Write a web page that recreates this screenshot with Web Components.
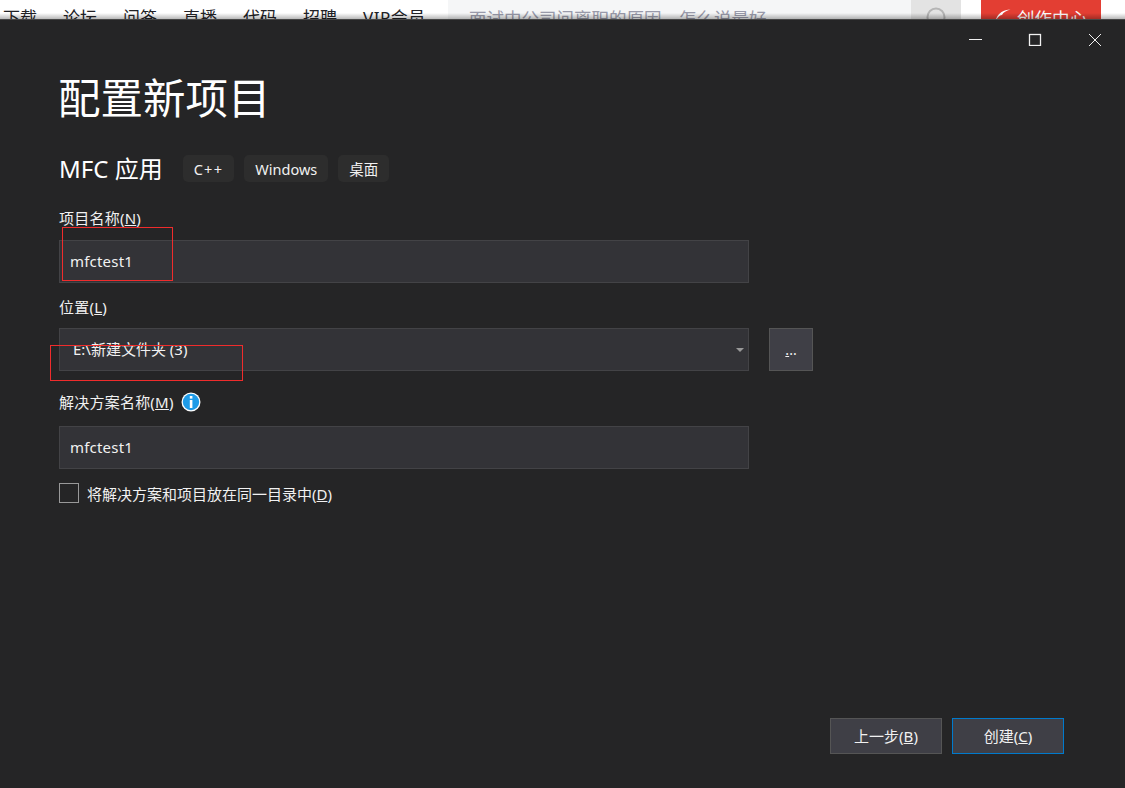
<!doctype html>
<html lang="zh-CN">
  <head>
    <meta charset="UTF-8" />
    <title>配置新项目</title>
    <style>
      html, body { margin: 0; height: 100%; overflow: hidden; background: #252526; }
      body { font-family: "Noto Sans", "Noto Sans CJK SC", sans-serif; }
    </style>
  </head>
  <body>
    <site-strip></site-strip>

    <vs-window>
      <page-title>配置新项目</page-title>

      <sub-title>
        <tag-chip style="letter-spacing:1.3px">C++</tag-chip>
        <tag-chip>Windows</tag-chip>
        <tag-chip>桌面</tag-chip>
      </sub-title>

      <form-field style="--top: 26px; --gap: 12px">
        <span slot="label">项目名称(<u>N</u>)</span>
        <text-box value="mfctest1"></text-box>
      </form-field>

      <form-field style="--top: 14px; --gap: 11px">
        <span slot="label">位置(<u>L</u>)</span>
        <div class="row" style="display:flex;gap:20px">
          <text-box value="E:\新建文件夹 (3)" drop></text-box>
          <vs-button style="--w:44px;--h:43px;--size:14px"><u>.</u>..</vs-button>
        </div>
      </form-field>

      <form-field style="--top: 21px; --gap: 14px">
        <span slot="label">解决方案名称(<u>M</u>)</span>
        <info-icon slot="extra"></info-icon>
        <text-box value="mfctest1"></text-box>
      </form-field>

      <check-row>将解决方案和项目放在同一目录中(<u>D</u>)</check-row>

      <action-bar>
        <vs-button>上一步(<u>B</u>)</vs-button>
        <vs-button primary>创建(<u>C</u>)</vs-button>
      </action-bar>

      <!-- red marks someone drew on top of the screenshot -->
      <mark-box style="left:62px;top:207px;width:109px;height:52px"></mark-box>
      <mark-box style="left:50px;top:325px;width:191px;height:34px"></mark-box>
    </vs-window>

    <script>
      // small helper so every element below stays short
      function define(name, html, extra) {
        const tpl = document.createElement('template')
        tpl.innerHTML = html
        class El extends HTMLElement {
          constructor() {
            super()
            this.attachShadow({ mode: 'open' }).appendChild(tpl.content.cloneNode(true))
          }
          connectedCallback() {
            if (extra) extra(this, this.shadowRoot)
          }
        }
        customElements.define(name, El)
      }

      // the browser page peeking out above the window
      define('site-strip', `
        <style>
          :host { display: block; height: 19px; overflow: hidden; background: #fff; position: relative; }
          .bar { display: flex; height: 19px; align-items: flex-start; }
          nav { display: flex; gap: 26px; padding: 6px 0 0 3px; width: 445px; font-size: 17px; line-height: 24px; color: #222226; }
          nav span:last-child { letter-spacing: .5px; }
          .search { width: 442px; padding: 6px 0 0 21px; height: 19px; background: #f5f6f7; font-size: 17.5px; line-height: 24px; color: #999aaa; white-space: nowrap; }
          .btn { width: 50px; height: 19px; background: #e3e3e3; display: flex; justify-content: center; }
          .make { margin-left: 20px; width: 120px; height: 19px; background: #e33e33; color: #fff; font-size: 17.5px; line-height: 24px; padding-top: 6px; display: flex; justify-content: center; gap: 6px; box-sizing: border-box; }
          .fade { position: absolute; left: 0; right: 0; bottom: 0; height: 6px; background: linear-gradient(rgba(0,0,0,0), rgba(0,0,0,.28)); }
        </style>
        <div class="bar">
          <nav><span>下载</span><span>论坛</span><span>问答</span><span>直播</span><span>代码</span><span>招聘</span><span>VIP会员</span></nav>
          <div class="search">面试中公司问离职的原因，怎么说最好</div>
          <div class="btn"><svg width="24" height="24" viewBox="0 0 24 24" style="margin-top:5px"><circle cx="12" cy="12" r="8.5" fill="none" stroke="#b5b5b5" stroke-width="2"/></svg></div>
          <div class="make">
            <svg width="16" height="14" viewBox="0 0 16 14" style="margin-top:3px"><path d="M0.5 12C2 5 8 .5 15.5 .5C11 2 8.5 3 7 6C5 6 3 8 .5 12Z" fill="#fff"/></svg>
            <span>创作中心</span>
          </div>
        </div>
        <div class="fade"></div>
      `)

      define('vs-window', `
        <style>
          :host { display: block; position: relative; height: 769px; box-sizing: border-box; background: #252526; border-top: 1px solid #464646; color: #f1f1f1; padding: 0 0 0 59px; }
          .controls { position: absolute; top: 0; right: 0; display: flex; }
          .controls div { width: 60px; height: 38px; display: flex; align-items: center; justify-content: center; }
          svg { display: block; }
        </style>
        <div class="controls">
          <div><svg width="14" height="14" viewBox="0 0 14 14"><path d="M1 7.5H14" stroke="#f1f1f1" fill="none"/></svg></div>
          <div><svg width="14" height="14" viewBox="0 0 14 14"><rect x="1.5" y="2.5" width="11" height="11" stroke="#f1f1f1" stroke-width="1.3" fill="none"/></svg></div>
          <div><svg width="14" height="14" viewBox="0 0 14 14"><path d="M1 2L13 14M13 2L1 14" stroke="#f1f1f1" fill="none"/></svg></div>
        </div>
        <slot></slot>
      `)

      define('page-title', `
        <style>
          :host { display: block; padding-top: 47px; height: 62px; font-size: 42.5px; line-height: 62px; margin-left: -1px; font-weight: 400; color: #fff; }
        </style>
        <slot></slot>
      `)

      define('sub-title', `
        <style>
          :host { display: flex; align-items: center; margin-top: 26px; height: 27px; }
          h2 { margin: 0 20px 0 0; font-size: 24px; line-height: 27px; font-weight: 400; color: #fff; }
          div { display: flex; gap: 10px; }
        </style>
        <h2>MFC 应用</h2>
        <div><slot></slot></div>
      `)

      define('tag-chip', `
        <style>
          :host { display: block; height: 27px; padding: 0 11px; background: #2d2d2d; border-radius: 5px; font-size: 14.5px; line-height: 29px; color: #f1f1f1; }
        </style>
        <slot></slot>
      `)

      define('form-field', `
        <style>
          :host { display: block; margin-top: var(--top, 20px); width: 754px; }
          .label { display: flex; align-items: center; gap: 7px; height: 20px; margin-bottom: var(--gap, 11px); font-size: 15px; line-height: 20px; color: #f1f1f1; }
          ::slotted(span) { letter-spacing: .015em; }
        </style>
        <div class="label"><slot name="label"></slot><slot name="extra"></slot></div>
        <slot></slot>
      `)

      define('text-box', `
        <style>
          :host { display: block; width: 690px; height: 43px; box-sizing: border-box; background: #333337; border: 1px solid #434346; position: relative; padding: 0 0 0 10px; font-size: 15px; line-height: 40px; color: #f1f1f1; letter-spacing: .2px; }
          :host([drop]) { padding-left: 13px; line-height: 41px; letter-spacing: normal; }
          i { display: none; position: absolute; right: 4px; top: 19px; width: 0; height: 0; border: 4px solid transparent; border-top: 4px solid #999; }
          :host([drop]) i { display: block; }
        </style>
        <span></span><i></i>
      `, (el, root) => {
        root.querySelector('span').textContent = el.getAttribute('value')
      })

      define('vs-button', `
        <style>
          :host { display: flex; align-items: center; justify-content: center; box-sizing: border-box; width: var(--w, 112px); height: var(--h, 36px); background: #3f3f46; border: 1px solid #555555; font-size: var(--size, 15px); color: #f1f1f1; line-height: 20px; }
          :host([primary]) { border-color: #007acc; }
        </style>
        <slot></slot>
      `)

      define('info-icon', `
        <style>:host { display: block; width: 20px; height: 20px; }</style>
        <svg width="20" height="20" viewBox="0 0 20 20">
          <circle cx="10" cy="10" r="9.5" fill="#fff"/>
          <circle cx="10" cy="10" r="8.2" fill="#1e9be8"/>
          <rect x="8.8" y="4" width="2.6" height="2.6" fill="#fff"/>
          <rect x="8.8" y="8" width="2.6" height="8" fill="#fff"/>
        </svg>
      `)

      define('check-row', `
        <style>
          :host { display: flex; align-items: center; gap: 8px; margin-top: 14px; height: 20px; font-size: 15px; line-height: 20px; color: #f1f1f1; }
          b { display: block; box-sizing: border-box; width: 20px; height: 20px; border: 1px solid #999; }
          span { margin-top: 2px; }
        </style>
        <b></b><span><slot></slot></span>
      `)

      define('action-bar', `
        <style>
          :host { display: flex; gap: 10px; justify-content: flex-end; margin: 215px 61px 0 0; }
        </style>
        <slot></slot>
      `)

      define('mark-box', `
        <style>:host { display: block; position: absolute; border: 1px solid #f02c2c; }</style>
      `)
    </script>
  </body>
</html>
